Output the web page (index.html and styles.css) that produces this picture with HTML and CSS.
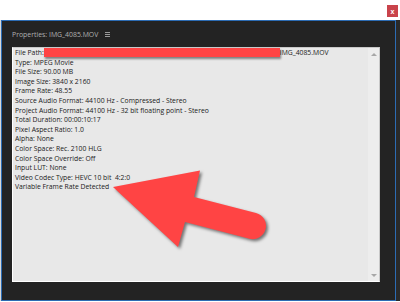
FILE: index.html
```html
<!DOCTYPE html>
<html>
<head>
<meta charset="utf-8">
<link rel="stylesheet" href="styles.css">
</head>
<body>
<div class="topbar">
  <div class="close"><span class="close-x">x</span></div>
</div>
<div class="outer">
  <div class="window">
    <div class="header">
      <span class="title">Properties: IMG_4085.MOV</span>
      <span class="menu"><i></i><i></i><i></i></span>
    </div>
    <div class="panel">
      <div class="lines">
        <div class="line">File Path:<span class="redact"></span>IMG_4085.MOV</div>
        <div class="line">Type: MPEG Movie</div>
        <div class="line">File Size: 90.00 MB</div>
        <div class="line">Image Size: 3840 x 2160</div>
        <div class="line">Frame Rate: 48.55</div>
        <div class="line">Source Audio Format: 44100 Hz - Compressed - Stereo</div>
        <div class="line">Project Audio Format: 44100 Hz - 32 bit floating point - Stereo</div>
        <div class="line">Total Duration: 00:00:10:17</div>
        <div class="line">Pixel Aspect Ratio: 1.0</div>
        <div class="line">Alpha: None</div>
        <div class="line">Color Space: Rec. 2100 HLG</div>
        <div class="line">Color Space Override: Off</div>
        <div class="line">Input LUT: None</div>
        <div class="line">Video Codec Type: HEVC 10 bit&nbsp; 4:2:0</div>
        <div class="line">Variable Frame Rate Detected</div>
      </div>
      <div class="scrollbar">
        <span class="tri-up"></span>
        <span class="tri-down"></span>
      </div>
    </div>
  </div>
</div>
<svg class="arrow" width="400" height="302" viewBox="0 0 400 302">
  <path d="M113,187 L200,170.5 L194,197 L256,213 A13.25,13.25 0 0 1 249.5,238.7 L185,222 L178,247 Z" fill="#ff4444"/>
</svg>
</body>
</html>
```
FILE: styles.css
```css
html, body {
  margin: 0;
  padding: 0;
}
body {
  width: 400px;
  height: 302px;
  background: #ffffff;
  overflow: hidden;
  position: relative;
  font-family: "Open Sans", "Noto Sans", sans-serif;
}
.topbar {
  height: 20px;
  display: flex;
  justify-content: flex-end;
  align-items: flex-start;
  background: #ffffff;
}
.close {
  margin-top: 5px;
  margin-right: 2px;
  width: 11px;
  height: 12px;
  background: #c9434b;
  display: flex;
  align-items: center;
  justify-content: center;
}
.close-x {
  color: #ffffff;
  font-family: "Liberation Sans", sans-serif;
  font-size: 7px;
  font-weight: bold;
  line-height: 7px;
}
.outer {
  height: 281px;
  background: #2a2a2a;
  border-left: 1px solid #d8d8d8;
  box-sizing: border-box;
}
.window {
  width: 395px;
  height: 281px;
  box-sizing: border-box;
  border: 1px solid #2c6cb4;
  background: #232323;
  display: flex;
  flex-direction: column;
  padding: 0 15px 18px 10px;
}
.header {
  height: 26px;
  display: flex;
  align-items: center;
  gap: 7px;
}
.title {
  color: #b0b0b0;
  font-size: 6.9px;
}
.menu {
  display: flex;
  flex-direction: column;
  gap: 1px;
  margin-top: 1px;
}
.menu i {
  display: block;
  width: 5px;
  height: 1px;
  background: #9a9a9a;
}
.panel {
  flex: 1;
  display: flex;
  background: #e8e8e8;
  border-top: 1px solid #c8c8c8;
  border-right: 1px solid #c8c8c8;
  border-left: 1px solid #ffffff;
  border-bottom: 1px solid #ffffff;
}
.lines {
  flex: 1;
  padding: 0 0 0 2px;
  color: #1a1a1a;
  font-size: 6.8px;
  line-height: 9.6px;
}
.line {
  white-space: nowrap;
  height: 9.6px;
}
.redact {
  display: inline-block;
  width: 236px;
  height: 9px;
  background: #ff4444;
  vertical-align: top;
  box-shadow: 1px 2px 2px rgba(0, 0, 0, 0.45);
}
.scrollbar {
  width: 11px;
  background: #ededed;
  display: flex;
  flex-direction: column;
  justify-content: space-between;
  align-items: center;
  padding: 5px 0 4px;
}
.tri-up {
  width: 0;
  height: 0;
  border-left: 3px solid transparent;
  border-right: 3px solid transparent;
  border-bottom: 3px solid #a8a8a8;
}
.tri-down {
  width: 0;
  height: 0;
  border-left: 3px solid transparent;
  border-right: 3px solid transparent;
  border-top: 3px solid #a8a8a8;
}
.arrow {
  position: absolute;
  left: 0;
  top: 0;
  pointer-events: none;
  filter: drop-shadow(2px 2px 1.5px rgba(0, 0, 0, 0.5));
}
```
